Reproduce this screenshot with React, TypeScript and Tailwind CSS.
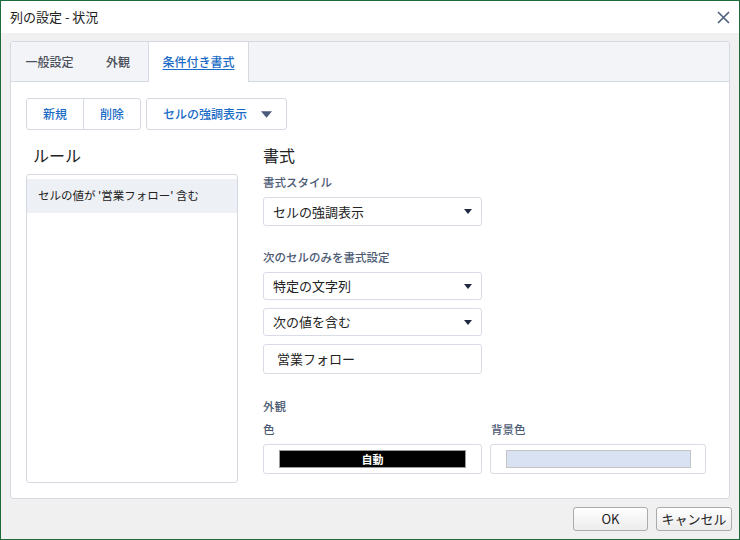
import React from "react";

const Caret = ({ className }: { className?: string }) => (
  <svg className={className} width="10" height="6" viewBox="0 0 10 6">
    <path d="M0 0 L10 0 L5 6 Z" fill="currentColor" />
  </svg>
);

const Select = ({ label }: { label: string }) => (
  <div className="h-[28px] w-[219px] border border-[#d8dce4] rounded-[3px] bg-white flex items-center justify-between pl-[9px] pr-[9px]">
    <span className="text-[13px] leading-[16px] text-[#222]">{label}</span>
    <Caret className="w-[8px] h-[5px] text-[#1f2940]" />
  </div>
);

export default function App() {
  return (
    <div
      className="w-[740px] h-[540px] border border-[#1e6b3c] bg-[#f0f0f0] flex flex-col"
      style={{ fontFamily: '"Noto Sans CJK JP", "Noto Sans", sans-serif' }}
    >
      {/* Title bar */}
      <div className="h-[32px] bg-white flex items-center justify-between pl-[9px] pr-[9px] shrink-0">
        <span className="text-[13px] leading-[16px] text-[#222]">列の設定 - 状況</span>
        <svg width="13" height="13" viewBox="0 0 13 13" className="text-[#4d5d7e]">
          <path d="M1 1 L12 12 M12 1 L1 12" stroke="currentColor" strokeWidth="1.6" />
        </svg>
      </div>

      {/* Panel */}
      <div className="mt-[8px] ml-[9px] w-[720px] h-[458px] bg-white border border-[#d5d9e2] rounded-[3px] flex flex-col shrink-0">
        {/* Tabs */}
        <div className="h-[40px] bg-[#f3f4f8] border-b border-[#d5d9e2] flex items-stretch rounded-t-[3px]">
          <div className="w-[77px] flex items-center justify-center text-[12px] font-medium text-[#4a4f5a]">一般設定</div>
          <div className="w-[60px] flex items-center justify-center text-[12px] font-medium text-[#4a4f5a]">外観</div>
          <div className="w-[101px] -mb-px bg-white border-l border-r border-[#d5d9e2] flex items-center justify-center text-[12px] font-medium text-[#1a6cc7] underline underline-offset-2">
            条件付き書式
          </div>
        </div>

        {/* Content */}
        <div className="px-[15px] pt-[16px] flex flex-col">
          {/* Button row */}
          <div className="flex items-center h-[32px]">
            <div className="flex h-[32px] border border-[#d5d9e2] rounded-[3px]">
              <div className="w-[57px] flex items-center justify-center text-[12px] font-medium text-[#1a6cc7] border-r border-[#d5d9e2]">新規</div>
              <div className="w-[56px] flex items-center justify-center text-[12px] font-medium text-[#1a6cc7]">削除</div>
            </div>
            <div className="ml-[5px] w-[141px] h-[32px] border border-[#d5d9e2] rounded-[3px] flex items-center pl-[16px]">
              <span className="text-[12px] font-medium text-[#1a6cc7]">セルの強調表示</span>
              <Caret className="ml-[14px] w-[11px] h-[7px] text-[#4a5a7a]" />
            </div>
          </div>

          {/* Columns */}
          <div className="flex mt-[15px] gap-[25px]">
            {/* Left */}
            <div className="w-[212px] flex flex-col">
              <div className="h-[20px] flex items-center pl-[7px] text-[16px] text-[#222]">ルール</div>
              <div className="mt-[9px] h-[309px] border border-[#d5d9e2] rounded-[3px] pt-[4px]">
                <div className="h-[34px] bg-[#edf0f5] flex items-center pl-[11px] text-[11.5px] text-[#222]">
                  セルの値が '営業フォロー' 含む
                </div>
              </div>
            </div>

            {/* Right */}
            <div className="flex-1 flex flex-col">
              <div className="h-[20px] flex items-center text-[16px] text-[#222]">書式</div>
              <div className="mt-[10px] h-[16px] flex items-center text-[11.5px] font-medium text-[#4c5a74]">書式スタイル</div>
              <div className="mt-[6px]">
                <div className="h-[29px] w-[219px] border border-[#d8dce4] rounded-[3px] bg-white flex items-center justify-between pl-[9px] pr-[9px]">
                  <span className="text-[13px] leading-[16px] text-[#222]">セルの強調表示</span>
                  <Caret className="w-[8px] h-[5px] text-[#1f2940]" />
                </div>
              </div>
              <div className="mt-[24px] h-[16px] flex items-center text-[11.5px] font-medium text-[#4c5a74]">次のセルのみを書式設定</div>
              <div className="mt-[6px]">
                <Select label="特定の文字列" />
              </div>
              <div className="mt-[8px]">
                <Select label="次の値を含む" />
              </div>
              <div className="mt-[8px] h-[30px] w-[219px] border border-[#d8dce4] rounded-[3px] bg-white flex items-center pl-[13px]">
                <span className="text-[13px] leading-[16px] text-[#222]">営業フォロー</span>
              </div>
              <div className="mt-[25px] h-[16px] flex items-center text-[11.5px] font-medium text-[#4c5a74]">外観</div>
              <div className="mt-[7px] flex gap-[8px]">
                <div className="w-[219px] flex flex-col">
                  <div className="h-[16px] flex items-center text-[11.5px] font-medium text-[#4c5a74]">色</div>
                  <div className="mt-[6px] h-[30px] border border-[#d8dce4] rounded-[3px] flex items-center pl-[15px]">
                    <div className="w-[187px] h-[18px] bg-black border border-[#9a9a9a] flex items-center justify-center text-[11px] font-bold text-white leading-none">
                      自動
                    </div>
                  </div>
                </div>
                <div className="w-[216px] flex flex-col">
                  <div className="h-[16px] flex items-center pl-[1px] text-[11.5px] font-medium text-[#4c5a74]">背景色</div>
                  <div className="mt-[6px] h-[30px] border border-[#d8dce4] rounded-[3px] flex items-center pl-[15px]">
                    <div className="w-[185px] h-[18px] bg-[#d9e2f2] border border-[#c4c4c4]" />
                  </div>
                </div>
              </div>
            </div>
          </div>
        </div>
      </div>

      {/* Footer */}
      <div className="flex justify-end gap-[8px] pr-[7px] mt-[8px]">
        <div className="w-[75px] h-[24px] border border-[#ababab] rounded-[3px] bg-gradient-to-b from-white to-[#ececec] flex items-center justify-center text-[13px] text-[#222]">
          OK
        </div>
        <div className="w-[76px] h-[24px] border border-[#ababab] rounded-[3px] bg-gradient-to-b from-white to-[#ececec] flex items-center justify-center text-[13px] text-[#222]">
          キャンセル
        </div>
      </div>
    </div>
  );
}
